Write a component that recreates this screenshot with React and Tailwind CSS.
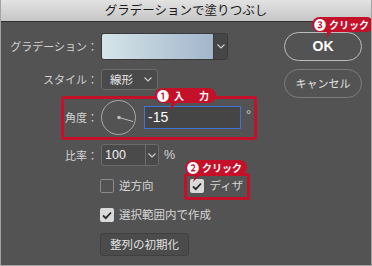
import React from 'react'

const jp = { fontFamily: '"Noto Sans CJK JP", "Noto Sans", sans-serif' }
const lib = { fontFamily: '"Liberation Sans", sans-serif' }

function Chevron() {
  return (
    <svg width="8" height="5" viewBox="0 0 8 5" className="text-[#cfcfcf]">
      <polyline points="0.5,0.5 4,4 7.5,0.5" fill="none" stroke="currentColor" strokeWidth="1.1" />
    </svg>
  )
}

function Check({ checked }) {
  return (
    <div
      className={`w-[14px] h-[14px] rounded-[2px] flex items-center justify-center ${
        checked ? 'bg-[#d9d9d9]' : 'border border-[#8a8a8a]'
      }`}
    >
      {checked && (
        <svg width="10" height="9" viewBox="0 0 10 9">
          <polyline points="1,4.5 3.8,7.2 9,1.5" fill="none" stroke="#2a2a2a" strokeWidth="1.8" />
        </svg>
      )}
    </div>
  )
}

function Callout({ className, num, children, tail }) {
  return (
    <div className={`absolute ${className}`}>
      <svg className="absolute" style={tail.style} width="14" height="12" viewBox="0 0 14 12">
        <polygon points={tail.points} fill="#c5102a" />
      </svg>
      <div className="relative h-[15px] rounded-full bg-[#c5102a] flex items-center pl-[2px] pr-[5px] text-white text-[10px] font-bold leading-none whitespace-nowrap gap-[3px]" style={jp}>
        <span className="text-[12px]">{num}</span>
        {children}
      </div>
    </div>
  )
}

function Label({ children }) {
  return <div className="w-[97px] text-right whitespace-nowrap text-[11px] text-[#d2d2d2]">{children}</div>
}

export default function App() {
  return (
    <div className="relative w-[372px] h-[266px] bg-[#535353] border-x border-b border-[#a3a3a3] flex flex-col overflow-hidden" style={jp}>
      <div className="h-[22px] shrink-0 bg-gradient-to-b from-[#e2e2e2] to-[#c6c6c6] border-b border-[#2f2f2f] flex items-center justify-center text-[12.5px] text-[#1b1b1b] leading-none">
        グラデーションで塗りつぶし
      </div>

      <div className="flex flex-1">
        <div className="flex-1 flex flex-col text-[11px] text-[#d6d6d6]">
          {/* gradient */}
          <div className="flex items-center mt-[11px] h-[27px]">
            <Label>グラデーション：</Label>
            <div className="ml-[3px] flex h-[27px] rounded-[3px] border border-[#3a3a3a] overflow-hidden">
              <div className="w-[111px] bg-gradient-to-r from-[#d5e5e9] to-[#a3b6cb]" />
              <div className="w-[14px] bg-[#464646] border-l border-[#3a3a3a] flex items-center justify-center">
                <Chevron />
              </div>
            </div>
          </div>

          {/* style */}
          <div className="flex items-center mt-[9px] h-[21px]">
            <Label>スタイル：</Label>
            <div className="ml-[3px] w-[57px] h-[21px] rounded-[3px] border border-[#6b6b6b] bg-[#4a4a4a] flex items-center justify-between pl-[8px] pr-[5px] text-[11.5px] text-[#e8e8e8]">
              <span>線形</span>
              <Chevron />
            </div>
          </div>

          {/* angle */}
          <div className="flex items-center mt-[10px] h-[35px]">
            <Label>角度：</Label>
            <div className="ml-[3px] w-[35px] h-[35px] rounded-full border border-[#a9a9a9] relative">
              <svg className="absolute inset-0" width="33" height="33" viewBox="0 0 33 33">
                <circle cx="17" cy="16.5" r="1.8" fill="#bdbdbd" />
                <line x1="17" y1="16.5" x2="31" y2="20.5" stroke="#bdbdbd" strokeWidth="1" />
              </svg>
            </div>
            <div className="ml-[8px] w-[97px] h-[23px] border border-[#3f73d6] bg-[#454545] flex items-center pl-[3px] text-[14px] text-white" style={lib}>
              -15
            </div>
            <div className="ml-[5px] mb-[6px] text-[13px] text-[#d6d6d6]" style={lib}>°</div>
          </div>

          {/* ratio */}
          <div className="flex items-center mt-[9px] h-[22px]">
            <Label>比率：</Label>
            <div className="ml-[3px] flex h-[22px] rounded-[3px] border border-[#6b6b6b] bg-[#4a4a4a] overflow-hidden">
              <div className="w-[43px] flex items-center pl-[3px] text-[12.5px] text-[#eeeeee]" style={lib}>100</div>
              <div className="w-[13px] border-l border-[#6b6b6b] flex items-center justify-center">
                <Chevron />
              </div>
            </div>
            <div className="ml-[5px] text-[12.5px]" style={lib}>%</div>
          </div>

          {/* reverse / dither */}
          <div className="flex items-center mt-[13px] h-[14px] pl-[99px]">
            <Check />
            <span className="ml-[5px] text-[11.5px]">逆方向</span>
            <div className="ml-[36px]">
              <Check checked />
            </div>
            <span className="ml-[6px] text-[11.5px]">ディザ</span>
          </div>

          <div className="flex items-center mt-[15px] h-[14px] pl-[99px]">
            <Check checked />
            <span className="ml-[5px] text-[11.5px]">選択範囲内で作成</span>
          </div>

          <div className="mt-[11px] pl-[99px]">
            <div className="w-[89px] h-[23px] rounded-[3px] border border-[#404040] bg-[#4b4b4b] flex items-center justify-center text-[11.5px] text-[#e2e2e2]">
              整列の初期化
            </div>
          </div>
        </div>

        <div className="w-[78px] mr-[9px] flex flex-col">
          <div className="mt-[10px] h-[29px] rounded-full border border-[#bdbdbd] flex items-center justify-center text-[14px] font-bold text-white" style={lib}>
            OK
          </div>
          <div className="mt-[8px] h-[29px] rounded-full border border-[#7c7c7c] flex items-center justify-center text-[11px] text-[#e2e2e2]">
            キャンセル
          </div>
        </div>
      </div>

      {/* annotation boxes */}
      <div className="absolute left-[60px] top-[96px] w-[196px] h-[44px] border-[3px] border-[#c5102a] rounded-[3px] pointer-events-none" />
      <div className="absolute left-[183px] top-[173px] w-[66px] h-[27px] border-[3px] border-[#c5102a] rounded-[3px] pointer-events-none" />

      <Callout
        className="left-[154px] top-[88px]"
        num="❶"
        tail={{ style: { left: 12, top: 10 }, points: '6,0 14,0 3,12' }}
      >
        <span className="ml-[2px]">入</span>
        <span className="ml-[12px] mr-[2px]">力</span>
      </Callout>
      <Callout
        className="left-[184px] top-[160px]"
        num="❷"
        tail={{ style: { left: 6, top: 10 }, points: '6,0 14,0 2,12' }}
      >
        <span>クリック</span>
      </Callout>
      <Callout
        className="left-[311px] top-[17px]"
        num="❸"
        tail={{ style: { left: 9, top: 10 }, points: '6,0 14,0 6,11' }}
      >
        <span>クリック</span>
      </Callout>
    </div>
  )
}
